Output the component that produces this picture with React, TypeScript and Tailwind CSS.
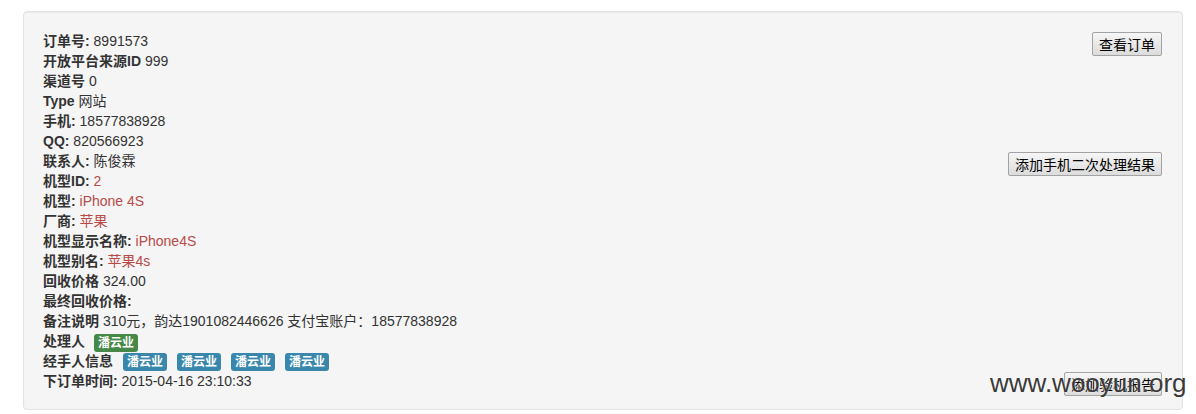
import React from 'react';

type Row = {
  label: string;
  value?: string;
  red?: boolean;
  action?: string;
};

const rows: Row[] = [
  { label: '订单号:', value: '8991573', action: '查看订单' },
  { label: '开放平台来源ID', value: '999' },
  { label: '渠道号', value: '0' },
  { label: 'Type', value: '网站' },
  { label: '手机:', value: '18577838928' },
  { label: 'QQ:', value: '820566923' },
  { label: '联系人:', value: '陈俊霖', action: '添加手机二次处理结果' },
  { label: '机型ID:', value: '2', red: true },
  { label: '机型:', value: 'iPhone 4S', red: true },
  { label: '厂商:', value: '苹果', red: true },
  { label: '机型显示名称:', value: 'iPhone4S', red: true },
  { label: '机型别名:', value: '苹果4s', red: true },
  { label: '回收价格', value: '324.00' },
  { label: '最终回收价格:' },
  { label: '备注说明', value: '310元，韵达1901082446626 支付宝账户：18577838928' },
];

const NativeButton: React.FC<{ children: React.ReactNode }> = ({ children }) => (
  <button className="float-right mt-px h-6 px-[6px] border border-[#a3a3a3] rounded-[2px] bg-gradient-to-b from-[#f6f6f6] to-[#dcdcdc] text-[14px] leading-[20px] text-black font-['Noto_Sans_CJK_SC',sans-serif]">
    {children}
  </button>
);

const Tag: React.FC<{ color: string; children: React.ReactNode }> = ({ color, children }) => (
  <span className={`inline-block h-[18px] px-[4px] rounded-[3px] text-[12px] leading-[18px] font-bold text-white align-middle ${color}`}>
    {children}
  </span>
);

export default function App() {
  return (
    <div className="relative w-[1196px] h-[414px] bg-white pt-[11px] pl-[23px] font-['Liberation_Sans','Noto_Sans_CJK_SC',sans-serif] text-[14px] leading-[20px] text-[#333]">
      <div className="w-[1160px] h-[399px] border border-[#e3e3e3] rounded-[4px] bg-[#f5f5f5] pt-[19px] pb-[19px] pl-[19px] pr-[20px] shadow-[inset_0_1px_1px_rgba(0,0,0,0.05)]">
        {rows.map((r) => (
          <div key={r.label} className="h-5">
            {r.action && <NativeButton>{r.action}</NativeButton>}
            <b className="font-bold">{r.label}</b>
            {r.value && (
              <span className={r.red ? 'text-[#b94a48]' : ''}> {r.value}</span>
            )}
          </div>
        ))}
        <div className="h-5 flex items-center">
          <b className="font-bold">处理人</b>
          <span className="ml-[9px] mt-px">
            <Tag color="bg-[#468847]">潘云业</Tag>
          </span>
        </div>
        <div className="h-5 flex items-center">
          <b className="font-bold">经手人信息</b>
          <div className="ml-[10px] mt-px flex gap-[10px]">
            <Tag color="bg-[#3a87ad]">潘云业</Tag>
            <Tag color="bg-[#3a87ad]">潘云业</Tag>
            <Tag color="bg-[#3a87ad]">潘云业</Tag>
            <Tag color="bg-[#3a87ad]">潘云业</Tag>
          </div>
        </div>
        <div className="h-5">
          <NativeButton>添加验机报告</NativeButton>
          <b className="font-bold">下订单时间:</b> 2015-04-16 23:10:33
        </div>
      </div>
      <div className="absolute left-[990px] top-[368px] text-[26px] leading-[30px] text-[#3a3a3a] font-['Liberation_Sans',sans-serif] [text-shadow:0_0_2px_#fff]">
        www.wooyun.org
      </div>
    </div>
  );
}
